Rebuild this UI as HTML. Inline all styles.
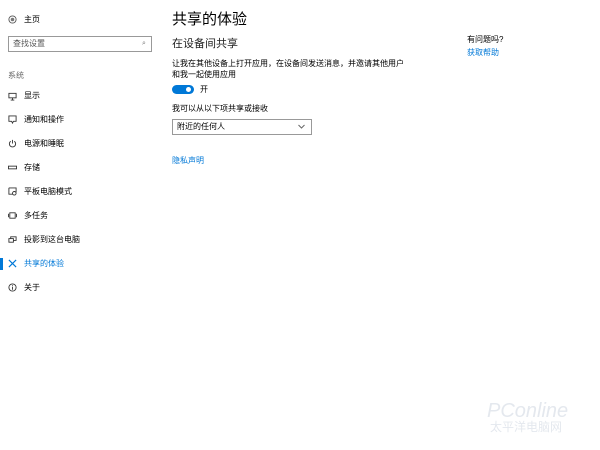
<!DOCTYPE html><html><head><meta charset="utf-8"><style>
body{margin:0;width:600px;height:450px;background:#fff;font-family:"Liberation Sans","Noto Sans CJK SC",sans-serif;color:#000;position:relative;overflow:hidden}
.a{position:absolute;white-space:nowrap;font-size:8px;line-height:10px}
.ic{position:absolute;left:8px;width:9px;height:9px}
</style></head><body>
<svg class="ic" style="top:15px" viewBox="0 0 10 10"><circle cx="5" cy="5" r="4" fill="none" stroke="#555"/><circle cx="5" cy="5" r="2" fill="#777"/></svg>
<div class="a" style="left:24px;top:15px">主页</div>
<div style="position:absolute;left:8px;top:36px;width:142px;height:14px;border:1px solid #999"></div>
<div class="a" style="left:13px;top:39px;color:#555">查找设置</div>
<div class="a" style="left:142px;top:39px;color:#777;font-size:7px">⌕</div>
<div class="a" style="left:8px;top:71px;color:#666">系统</div>
<svg class="ic" style="top:92px" viewBox="0 0 10 10"><rect x="1" y="1.5" width="8" height="5" fill="none" stroke="#333"/><path d="M5 6.5V9M3 9h4" stroke="#333"/></svg>
<div class="a" style="left:24px;top:91px">显示</div>
<svg class="ic" style="top:115px" viewBox="0 0 10 10"><path d="M1 1h8v6H6L5 9 4 7H1z" fill="none" stroke="#333"/></svg>
<div class="a" style="left:24px;top:115px">通知和操作</div>
<svg class="ic" style="top:139px" viewBox="0 0 10 10"><path d="M3 2.5A3.5 3.5 0 1 0 7 2.5M5 1v4" fill="none" stroke="#333"/></svg>
<div class="a" style="left:24px;top:139px">电源和睡眠</div>
<svg class="ic" style="top:163px" viewBox="0 0 10 10"><rect x="0.5" y="3.5" width="9" height="3" fill="none" stroke="#333"/></svg>
<div class="a" style="left:24px;top:163px">存储</div>
<svg class="ic" style="top:187px" viewBox="0 0 10 10"><path d="M1 1h8v5M1 1v7h4" fill="none" stroke="#333"/><circle cx="7" cy="7" r="2" fill="none" stroke="#333"/></svg>
<div class="a" style="left:24px;top:187px">平板电脑模式</div>
<svg class="ic" style="top:211px" viewBox="0 0 10 10"><rect x="2" y="2" width="6" height="6" fill="none" stroke="#333"/><path d="M0.5 3v4M9.5 3v4" stroke="#333"/></svg>
<div class="a" style="left:24px;top:211px">多任务</div>
<svg class="ic" style="top:235px" viewBox="0 0 10 10"><rect x="1" y="4" width="5" height="4" fill="none" stroke="#333"/><path d="M3 4V2h6v4H6" fill="none" stroke="#333"/></svg>
<div class="a" style="left:24px;top:235px">投影到这台电脑</div>
<div style="position:absolute;left:0;top:258px;width:3px;height:12px;background:#0078d7"></div>
<svg class="ic" style="top:259px" viewBox="0 0 10 10"><path d="M1 1l8 8M9 1L1 9" stroke="#0078d7" stroke-width="1.3"/></svg>
<div class="a" style="left:24px;top:259px;color:#0078d7">共享的体验</div>
<svg class="ic" style="top:283px" viewBox="0 0 10 10"><circle cx="5" cy="5" r="4" fill="none" stroke="#333"/><path d="M5 4v3.5M5 2.5v.8" stroke="#333"/></svg>
<div class="a" style="left:24px;top:283px">关于</div>

<div class="a" style="left:172px;top:11px;font-size:15px;line-height:18px">共享的体验</div>
<div class="a" style="left:172px;top:38px;font-size:11px;line-height:13px;color:#222">在设备间共享</div>
<div class="a" style="left:172px;top:59px">让我在其他设备上打开应用，在设备间发送消息，并邀请其他用户</div>
<div class="a" style="left:172px;top:70px">和我一起使用应用</div>
<div style="position:absolute;left:172px;top:85px;width:22px;height:9px;border-radius:5px;background:#0078d7"></div>
<div style="position:absolute;left:186px;top:87px;width:5px;height:5px;border-radius:50%;background:#fff"></div>
<div class="a" style="left:200px;top:85px">开</div>
<div class="a" style="left:172px;top:104px">我可以从以下项共享或接收</div>
<div style="position:absolute;left:172px;top:119px;width:138px;height:14px;border:1px solid #999"></div>
<div class="a" style="left:177px;top:122px">附近的任何人</div>
<svg style="position:absolute;left:298px;top:124px" width="7" height="5" viewBox="0 0 7 5"><path d="M0.5 1l3 3 3-3" fill="none" stroke="#666"/></svg>
<div class="a" style="left:172px;top:156px;color:#0078d7">隐私声明</div>
<div class="a" style="left:467px;top:35px">有问题吗?</div>
<div class="a" style="left:467px;top:48px;color:#0078d7">获取帮助</div>
<div class="a" style="left:487px;top:400px;font-size:20px;line-height:22px;color:#e4e8ee;font-style:italic">PConline</div>
<div class="a" style="left:490px;top:420px;font-size:12px;line-height:14px;color:#e4e8ee">太平洋电脑网</div>
</body></html>
